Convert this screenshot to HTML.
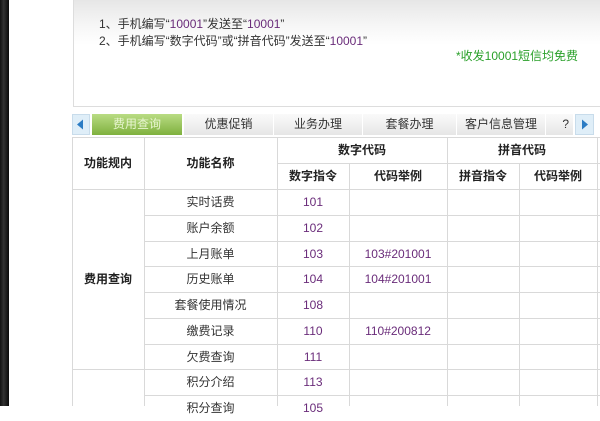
<!DOCTYPE html><html><head><meta charset="utf-8"><style>
*{margin:0;padding:0;box-sizing:border-box}
body{width:600px;height:406px;overflow:hidden;background:#fff;position:relative;font-family:"Liberation Sans","Noto Sans CJK SC",sans-serif;font-size:12px;color:#333}
.a{position:absolute}
.top{left:73px;top:-1px;width:530px;height:108px;border:1px solid #ddd;background:linear-gradient(#e6e6e6 0,#f6f6f6 25px,#fff 45px)}
.tab{position:absolute;top:114px;height:21px;line-height:21px;text-align:center;background:linear-gradient(#fafafa,#e6e6e6);border-right:1px solid #fff;color:#333}
.c{position:absolute;text-align:center;line-height:26px}
.h{font-weight:bold;color:#222}
.p{color:#6a2c7a}
.hl{position:absolute;left:144px;width:456px;height:1px;background:#d9d9d9}
.vl{position:absolute;width:1px;background:#d9d9d9}
</style></head><body>
<div class="a" style="left:0;top:0;width:9px;height:406px;background:linear-gradient(90deg,#111,#333 40%,#0a0a0a)"></div>
<div class="a top"></div>
<div class="a" style="left:99px;top:16px;line-height:16px">1、手机编写“<span class="p">10001</span>”发送至“<span class="p">10001</span>”</div>
<div class="a" style="left:99px;top:33px;line-height:16px">2、手机编写“数字代码”或“拼音代码”发送至“<span class="p">10001</span>”</div>
<div class="a" style="left:456px;top:48px;line-height:16px;color:#2aa02a">*收发10001短信均免费</div>
<div class="a" style="left:72px;top:114px;width:18px;height:21px;background:#dfeef8;border:1px solid #c8dceb"><svg width="16" height="19"><path d="M4 9.5L10 4.5V14.5Z" fill="#2b7cc4"/></svg></div>
<div class="tab" style="left:92px;width:91px;background:linear-gradient(#b9dc84,#7fb13e);color:#e8f5d0">费用查询</div>
<div class="tab" style="left:184px;width:90px">优惠促销</div>
<div class="tab" style="left:274px;width:89px">业务办理</div>
<div class="tab" style="left:363px;width:94px">套餐办理</div>
<div class="tab" style="left:457px;width:89px">客户信息管理</div>
<div class="tab" style="left:546px;width:28px;text-align:right;padding-right:4px">?</div>
<div class="a" style="left:575px;top:114px;width:19px;height:21px;background:#dfeef8;border:1px solid #c8dceb"><svg width="17" height="19"><path d="M6 4.5L12 9.5L6 14.5Z" fill="#2b7cc4"/></svg></div>
<!-- table grid -->
<div class="a" style="left:72px;top:137px;width:530px;height:1px;background:#d9d9d9"></div>
<div class="a" style="left:72px;top:189px;width:530px;height:1px;background:#d9d9d9"></div>
<div class="a" style="left:72px;top:369px;width:530px;height:1px;background:#d9d9d9"></div>
<div class="a" style="left:277px;top:163px;width:323px;height:1px;background:#d9d9d9"></div>
<div class="hl" style="top:215px"></div><div class="hl" style="top:241px"></div><div class="hl" style="top:266px"></div><div class="hl" style="top:292px"></div><div class="hl" style="top:318px"></div><div class="hl" style="top:344px"></div><div class="hl" style="top:395px"></div>
<div class="vl" style="left:72px;top:137px;height:269px"></div>
<div class="vl" style="left:144px;top:137px;height:269px"></div>
<div class="vl" style="left:277px;top:137px;height:269px"></div>
<div class="vl" style="left:349px;top:163px;height:243px"></div>
<div class="vl" style="left:447px;top:137px;height:269px"></div>
<div class="vl" style="left:519px;top:163px;height:243px"></div>
<div class="vl" style="left:597px;top:137px;height:269px"></div>
<div class="c h" style="left:72px;top:150px;width:72px">功能规内</div>
<div class="c h" style="left:144px;top:150px;width:133px">功能名称</div>
<div class="c h" style="left:277px;top:137px;width:170px">数字代码</div>
<div class="c h" style="left:447px;top:137px;width:150px">拼音代码</div>
<div class="c h" style="left:277px;top:163px;width:72px">数字指令</div>
<div class="c h" style="left:349px;top:163px;width:98px">代码举例</div>
<div class="c h" style="left:447px;top:163px;width:72px">拼音指令</div>
<div class="c h" style="left:519px;top:163px;width:78px">代码举例</div>
<div class="c h" style="left:72px;top:266px;width:72px">费用查询</div>
<div class="c" style="left:144px;top:189px;width:133px">实时话费</div><div class="c p" style="left:277px;top:189px;width:72px">101</div>
<div class="c" style="left:144px;top:215px;width:133px">账户余额</div><div class="c p" style="left:277px;top:215px;width:72px">102</div>
<div class="c" style="left:144px;top:241px;width:133px">上月账单</div><div class="c p" style="left:277px;top:241px;width:72px">103</div><div class="c p" style="left:349px;top:241px;width:98px">103#201001</div>
<div class="c" style="left:144px;top:266px;width:133px">历史账单</div><div class="c p" style="left:277px;top:266px;width:72px">104</div><div class="c p" style="left:349px;top:266px;width:98px">104#201001</div>
<div class="c" style="left:144px;top:292px;width:133px">套餐使用情况</div><div class="c p" style="left:277px;top:292px;width:72px">108</div>
<div class="c" style="left:144px;top:318px;width:133px">缴费记录</div><div class="c p" style="left:277px;top:318px;width:72px">110</div><div class="c p" style="left:349px;top:318px;width:98px">110#200812</div>
<div class="c" style="left:144px;top:344px;width:133px">欠费查询</div><div class="c p" style="left:277px;top:344px;width:72px">111</div>
<div class="c" style="left:144px;top:369px;width:133px">积分介绍</div><div class="c p" style="left:277px;top:369px;width:72px">113</div>
<div class="c" style="left:144px;top:395px;width:133px">积分查询</div><div class="c p" style="left:277px;top:395px;width:72px">105</div>
</body></html>
